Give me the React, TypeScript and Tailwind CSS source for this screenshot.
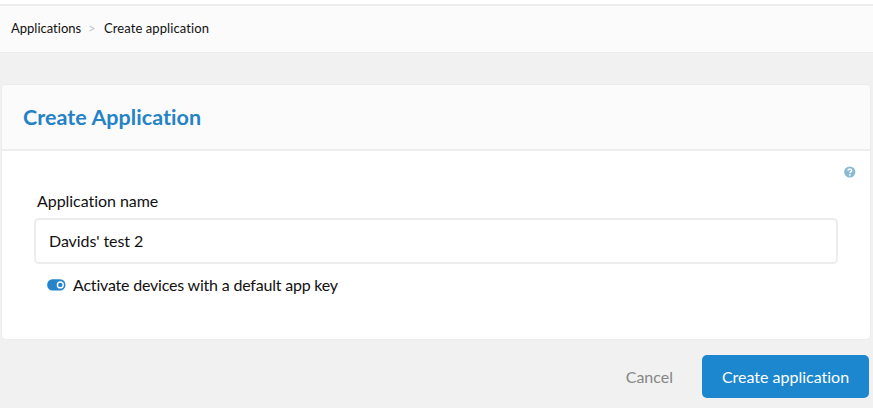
function HelpIcon() {
  return (
    <svg width="12" height="12" viewBox="0 0 12 12" aria-label="Help">
      <circle cx="5.8" cy="6" r="5.6" fill="#8ab9d6" />
      <path d="M4.1 4.7c0-2.3 3.6-2.2 3.6 0C7.7 5.9 5.9 5.8 5.9 7" fill="none" stroke="#fff" strokeWidth="1.5" />
      <rect x="5.1" y="8.1" width="1.6" height="1.5" fill="#fff" />
    </svg>
  );
}

function Toggle() {
  return (
    <svg width="19" height="12" viewBox="0 0 19 12" aria-label="On">
      <rect x="0.2" y="0.2" width="18.2" height="11.2" rx="5.2" fill="#2585cb" />
      <circle cx="13.3" cy="5.9" r="2.9" fill="#2585cb" stroke="#fff" strokeWidth="1.4" />
    </svg>
  );
}

export default function App() {
  return (
    <div className="flex h-[408px] w-[873px] flex-col overflow-hidden bg-[#f1f1f1] font-['Lato',sans-serif] text-base text-[#111] [font-variant-ligatures:none]">
      <div className="h-1 shrink-0 bg-white" />
      <nav className="flex h-[49px] shrink-0 items-center border-t-2 border-b border-[#ededed] bg-[#fbfbfb] pb-[2px] pl-[11px] text-[13px] leading-5">
        <a className="w-[70px] whitespace-nowrap">Applications</a>
        <span className="ml-[7px] w-4 text-[13px] text-[#c5c5c5]">&gt;</span>
        <span className="tracking-[0.09px] whitespace-nowrap">Create application</span>
      </nav>

      <main className="mt-[31px] ml-px flex h-[256px] w-[870px] shrink-0 flex-col overflow-hidden rounded-[5px] border border-[#ececec] bg-white">
        <header className="flex h-[66px] shrink-0 items-center border-b-2 border-[#ededed] bg-[#fbfbfb] pl-[21px]">
          <h1 className="text-[21.5px] leading-7 font-bold tracking-[0.05px] text-[#2482c6]">Create Application</h1>
        </header>
        <div className="flex h-10 shrink-0 justify-end pt-[14.5px] pr-[14px]">
          <HelpIcon />
        </div>
        <form className="flex flex-col px-8">
          <label className="pl-[3px] leading-[20px] tracking-[-0.05px]">Application name</label>
          <div className="mt-[7px] flex h-[46px] items-center rounded-[5px] border-2 border-[#ececec] bg-white pl-[13px] tracking-[-0.08px]">
            Davids' test 2
          </div>
          <div className="mt-[11px] flex h-5 items-center pl-[13px]">
            <Toggle />
            <span className="ml-[7px] tracking-[-0.2px]">Activate devices with a default app key</span>
          </div>
        </form>
      </main>

      <footer className="mt-[15px] flex h-[43px] shrink-0 items-center justify-end pr-1">
        <button className="mr-[29px] text-[#868686]">Cancel</button>
        <button className="h-[43px] w-[167px] rounded-[5px] bg-[#1c86cf] whitespace-nowrap text-white">Create application</button>
      </footer>
    </div>
  );
}
